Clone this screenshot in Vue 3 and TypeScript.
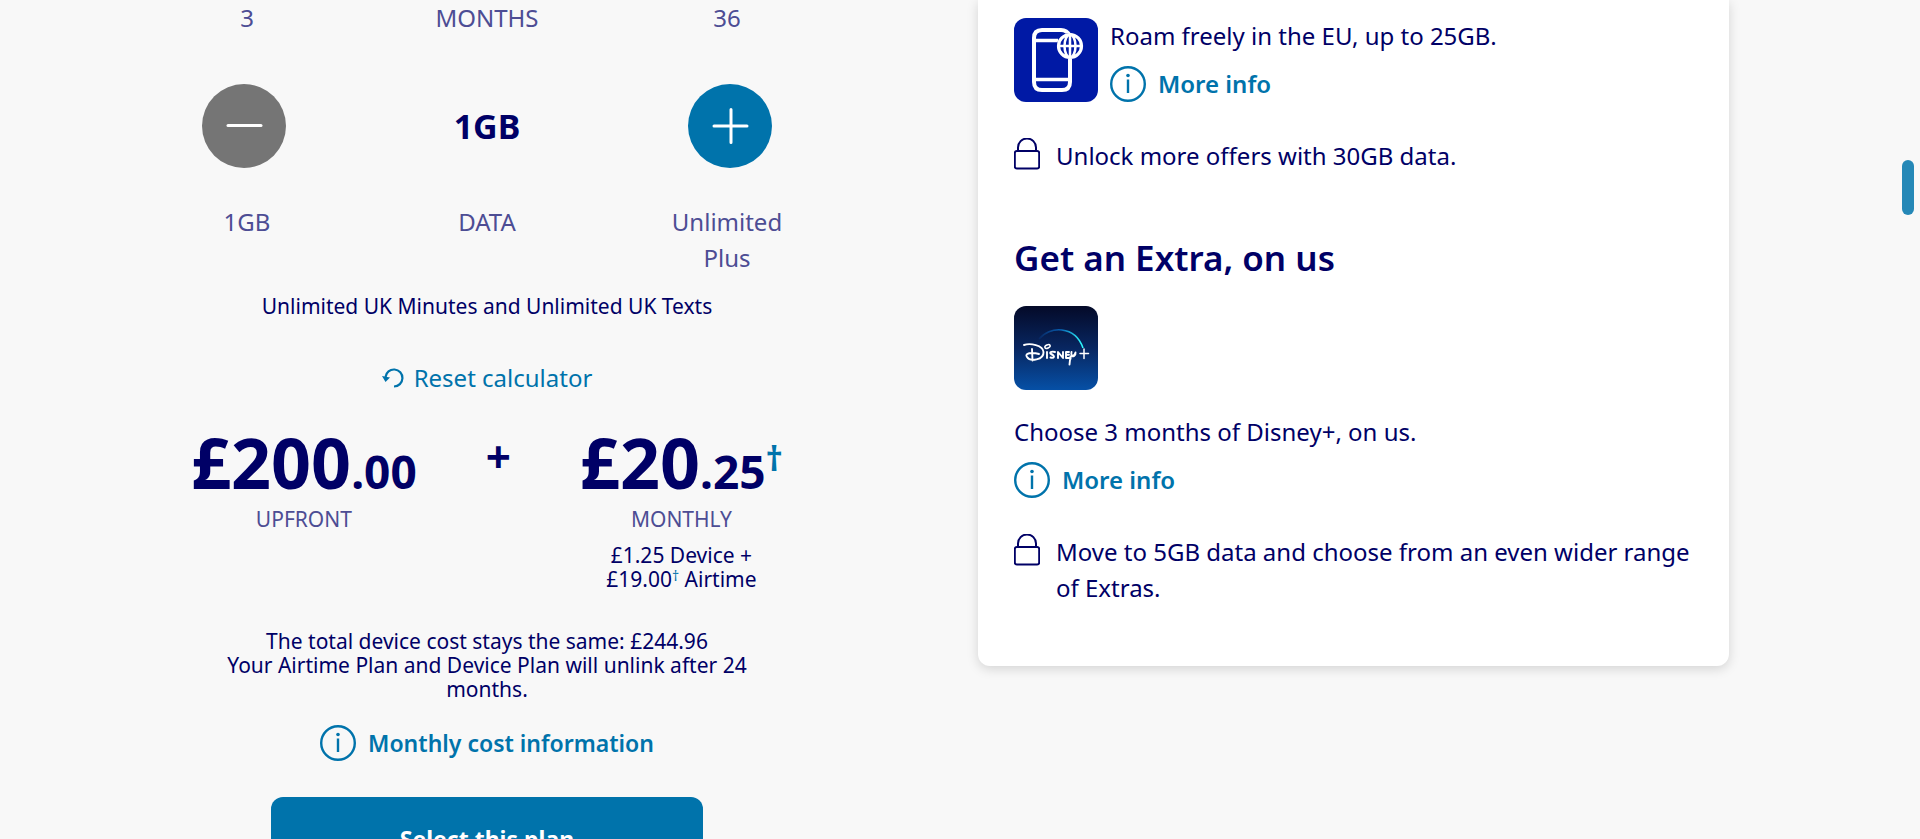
<script setup lang="ts">
import { ref } from 'vue'

const labels = ref({
  months: ['3', 'MONTHS', '36'],
  data: ['1GB', 'DATA', 'Unlimited Plus'],
})
const selectedData = ref('1GB')
</script>

<template>
  <main class="page">
    <section class="calculator" aria-label="Plan calculator">
      <div class="labels">
        <span v-for="label in labels.months" :key="label">{{ label }}</span>
      </div>

      <div class="stepper">
        <button class="step step-off" type="button" aria-label="Less data">
          <svg viewBox="0 0 84 84" aria-hidden="true"><path d="M26 41.500H59" /></svg>
        </button>
        <output class="step-value">{{ selectedData }}</output>
        <button class="step" type="button" aria-label="More data">
          <svg viewBox="0 0 84 84" aria-hidden="true"><path d="M26 42H59M43 25.500V58.500" /></svg>
        </button>
      </div>

      <div class="labels">
        <span v-for="label in labels.data" :key="label">{{ label }}</span>
      </div>

      <p class="allowance">Unlimited UK Minutes and Unlimited UK Texts</p>

      <button class="reset" type="button">
        <svg viewBox="0 0 22 22" aria-hidden="true">
          <path d="M3.500 10A8.500 8.500 0 1 1 12 19.500" fill="none" stroke="currentColor" stroke-width="2.200" />
          <path d="M0 9L8 10.500L3.500 15Z" fill="currentColor" />
        </svg>
        Reset calculator
      </button>

      <div class="prices">
        <div class="price">
          <p class="amount">£200<span class="pence">.00</span></p>
          <p class="caption">UPFRONT</p>
        </div>
        <span class="plus">+</span>
        <div class="price">
          <p class="amount">£20<span class="pence">.25</span><a class="dagger" href="#airtime">†</a></p>
          <p class="caption">MONTHLY</p>
          <p class="breakdown">£1.25 Device +<br />£19.00<a class="small-dagger" href="#airtime">†</a> Airtime</p>
        </div>
      </div>

      <p class="summary">
        The total device cost stays the same: £244.96<br />
        Your Airtime Plan and Device Plan will unlink after 24 months.
      </p>

      <a class="info cost-info" href="#cost">
        <svg viewBox="0 0 36 36" aria-hidden="true">
          <circle cx="18" cy="18" r="16.800" /><path d="M18 13.500V27" /><circle class="dot" cx="18" cy="9.500" r="1.800" />
        </svg>
        Monthly cost information
      </a>

      <button class="select" type="button">Select this plan</button>
    </section>

    <aside class="card">
      <div class="roam">
        <svg class="tile" viewBox="0 0 84 84" aria-hidden="true">
          <rect width="84" height="84" fill="#0019a5" />
          <g fill="none" stroke="#fff" stroke-width="4">
            <path d="M56 18Q53 12 47 12H28Q20 12 20 20V64Q20 72 28 72H48Q56 72 56 64V41" />
            <path d="M20 22.500H44M20 61.500H56" stroke-width="3.500" />
            <circle cx="56" cy="28" r="13" fill="#0019a5" stroke="none" />
            <circle cx="56" cy="28" r="11.500" stroke-width="3.200" />
            <ellipse cx="56" cy="28" rx="5.500" ry="11.500" stroke-width="2.500" />
            <path d="M44.500 28H67.500M56 16.500V39.500" stroke-width="2.500" />
          </g>
        </svg>
        <div class="roam-text">
          <p>Roam freely in the EU, up to 25GB.</p>
          <a class="info" href="#roam">
            <svg viewBox="0 0 36 36" aria-hidden="true">
              <circle cx="18" cy="18" r="16.800" /><path d="M18 13.500V27" /><circle class="dot" cx="18" cy="9.500" r="1.800" />
            </svg>
            More info
          </a>
        </div>
      </div>

      <p class="locked">
        <svg viewBox="0 0 26 32" aria-hidden="true">
          <path d="M4 13V9.500A8.500 8.500 0 0 1 22 9.500V13" />
          <rect x="0.800" y="13" width="24.400" height="17.500" rx="2" />
        </svg>
        Unlock more offers with 30GB data.
      </p>

      <h2>Get an Extra, on us</h2>
      <svg class="tile" viewBox="0 0 84 84" role="img" aria-label="Disney+">
        <defs>
          <linearGradient id="night" x1="0" y1="0" x2="0" y2="1">
            <stop offset="0" stop-color="#040a28" /><stop offset="0.500" stop-color="#082660" /><stop offset="1" stop-color="#0650a6" />
          </linearGradient>
          <linearGradient id="arc" x1="24" y1="0" x2="69" y2="0" gradientUnits="userSpaceOnUse">
            <stop offset="0" stop-color="#08245e" /><stop offset="0.500" stop-color="#075fb2" /><stop offset="1" stop-color="#2fffff" />
          </linearGradient>
        </defs>
        <rect width="84" height="84" fill="url(#night)" />
        <path d="M25 33C35 20 61 19 69 42" fill="none" stroke="url(#arc)" stroke-width="1.600" />
        <g fill="none" stroke="#fff" stroke-width="1.900" stroke-linecap="round" stroke-linejoin="round">
          <path d="M10 39C16 37 29 39 29.500 46C30 54 16 56 13 51C10 47 18 46 25 48M18 43L18.500 54.500" />
          <ellipse cx="33.500" cy="40.500" rx="2.800" ry="1.600" stroke-width="1.500" transform="rotate(-25 33.500 40.500)" />
          <path d="M33 46V52M41 46C37 45 35 46.500 37 48C42 50 40 52.500 36.500 51.500M44 52V46L49 52V46M55 46H52V52H55M52 48.800H55M57.500 46C56.500 51 60 51 61.500 46.500C62 50 59 51 57 50C54.500 53 58 50 56 54L55.500 58.500" />
          <path d="M66 47.500H74.500M70 43V52.500" stroke-width="1.500" />
        </g>
      </svg>

      <p class="extra">Choose 3 months of Disney+, on us.</p>
      <a class="info" href="#disney">
        <svg viewBox="0 0 36 36" aria-hidden="true">
          <circle cx="18" cy="18" r="16.800" /><path d="M18 13.500V27" /><circle class="dot" cx="18" cy="9.500" r="1.800" />
        </svg>
        More info
      </a>

      <p class="locked">
        <svg viewBox="0 0 26 32" aria-hidden="true">
          <path d="M4 13V9.500A8.500 8.500 0 0 1 22 9.500V13" />
          <rect x="0.800" y="13" width="24.400" height="17.500" rx="2" />
        </svg>
        Move to 5GB data and choose from an even wider range of Extras.
      </p>
    </aside>

    <div class="scroll-thumb" aria-hidden="true"></div>
  </main>
</template>

<style>
html,
body {
  background: #f8f8f8;
  scrollbar-width: none;
}
</style>

<style scoped>
.page {
  display: grid;
  grid-template-columns: 720fr 751fr;
  gap: 131px;
  align-items: start;
  padding: 0 191px 0 127px;
  color: #000066;
  font-family: "Noto Sans", "Open Sans", sans-serif;
  font-size: 24px;
  line-height: 36px;
}

p,
h2 {
  margin: 0;
}

button {
  border: 0;
  padding: 0;
  background: none;
  font: inherit;
  cursor: pointer;
}

a {
  color: #0073ab;
  text-decoration: none;
}

.calculator {
  display: flex;
  flex-direction: column;
  align-items: center;
  text-align: center;
}

.labels {
  display: grid;
  grid-template-columns: repeat(3, 1fr);
  align-self: stretch;
  color: #4d4d94;
}

.labels span {
  padding: 0 48px;
}

.stepper {
  display: flex;
  justify-content: space-between;
  align-items: center;
  align-self: stretch;
  margin: 48px 75px 36px;
}

.step {
  width: 84px;
  height: 84px;
  border-radius: 50%;
  background: #0073ab;
}

.step-off {
  background: #757575;
}

.step svg {
  display: block;
  fill: none;
  stroke: #fff;
  stroke-width: 3;
  stroke-linecap: round;
}

.step-value {
  font-size: 34px;
  font-weight: 700;
}

.allowance {
  margin-top: 12px;
  font-size: 21px;
}

.reset {
  display: flex;
  align-items: center;
  gap: 10px;
  margin-top: 36px;
  color: #0073ab;
}

.reset svg {
  width: 22px;
  height: 22px;
}

.prices {
  display: flex;
  justify-content: space-between;
  align-self: stretch;
  margin: 30px 64px 0;
}

.amount {
  font-size: 70px;
  font-weight: 700;
  line-height: 72px;
}

.pence {
  font-size: 46px;
}

.dagger {
  font-size: 34px;
  font-weight: 700;
  line-height: 34px;
  vertical-align: 18px;
}

.plus {
  font-size: 44px;
  font-weight: 700;
  line-height: 60px;
}

.caption {
  color: #4d4d94;
  font-size: 21px;
  line-height: 24px;
}

.breakdown,
.summary {
  font-size: 21px;
  line-height: 24px;
}

.breakdown {
  margin-top: 12px;
}

.small-dagger {
  font-size: 14px;
  line-height: 14px;
  vertical-align: 6px;
}

.summary {
  max-width: 540px;
  margin-top: 38px;
}

.info {
  display: flex;
  align-items: center;
  gap: 12px;
  width: fit-content;
  font-weight: 600;
}

.info svg {
  width: 36px;
  height: 36px;
  fill: none;
  stroke: currentColor;
  stroke-width: 2.4;
}

.info .dot {
  fill: currentColor;
  stroke: none;
}

.cost-info {
  margin-top: 24px;
  font-size: 23px;
}

.select {
  width: 60%;
  height: 84px;
  margin-top: 36px;
  border-radius: 12px;
  background: #0073ab;
  color: #fff;
  font-size: 23px;
  font-weight: 700;
}

.card {
  padding: 18px 36px 60px;
  border-radius: 0 0 12px 12px;
  background: #fff;
  box-shadow: 0 3px 12px rgba(0, 0, 0, 0.15);
}

.roam {
  display: flex;
  gap: 12px;
}

.tile {
  display: block;
  width: 84px;
  height: 84px;
  border-radius: 12px;
}

.roam-text {
  display: flex;
  flex-direction: column;
  gap: 12px;
}

.locked {
  display: flex;
  align-items: flex-start;
  gap: 16px;
  margin-top: 36px;
}

.locked svg {
  flex: none;
  width: 26px;
  height: 32px;
  fill: none;
  stroke: currentColor;
  stroke-width: 2;
}

h2 {
  margin: 60px 0 24px;
  font-size: 35px;
  font-weight: 600;
  line-height: 48px;
}

.extra {
  margin: 24px 0 12px;
}

.scroll-thumb {
  position: fixed;
  top: 160px;
  right: 6px;
  width: 12px;
  height: 55px;
  border-radius: 6px;
  background: #2588b7;
}
</style>
